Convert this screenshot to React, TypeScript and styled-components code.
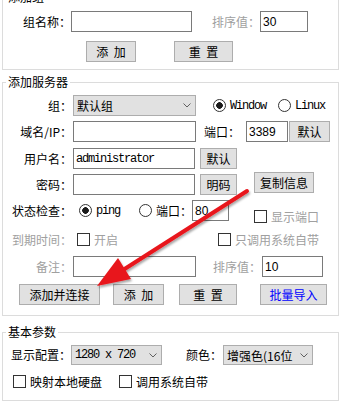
import React from 'react';
import styled, { createGlobalStyle } from 'styled-components';

const CJK = `"Noto Sans CJK SC", "Liberation Sans", sans-serif`;
const MONO = `"Liberation Mono", "Noto Sans CJK SC", monospace`;
const SANS = `"Liberation Sans", "Noto Sans CJK SC", sans-serif`;

const GlobalStyle = createGlobalStyle`
  html, body { margin: 0; padding: 0; background: #ffffff; }
  body {
    font-family: ${CJK};
    font-size: 12px;
    color: #000;
  }
`;

const Page = styled.div`
  position: relative;
  width: 344px;
  height: 402px;
  overflow: hidden;
  background: #fff;
`;

// the first group box is scrolled a little out of view
const Stack = styled.div`
  display: flex;
  flex-direction: column;
  margin-top: -10px;
`;

const Group = styled.fieldset<{ $mt: number; $pt: number; $pb: number }>`
  box-sizing: border-box;
  width: 337px;
  min-width: 0;
  margin: ${p => p.$mt}px 0 0 2px;
  padding: ${p => p.$pt}px 0 ${p => p.$pb}px 0;
  border: 1px solid #dcdcdc;
`;

const Legend = styled.legend`
  margin-left: 3px;
  padding: 0 2px;
  font-family: ${CJK};
  font-size: 12px;
  line-height: 14px;
  color: #000;
`;

const Row = styled.div<{ $mt?: number; $h?: number }>`
  display: flex;
  align-items: center;
  height: ${p => p.$h ?? 21}px;
  margin-top: ${p => p.$mt ?? 0}px;
`;

const Label = styled.span<{ $w?: number; $ml?: number; $muted?: boolean }>`
  flex: none;
  ${p => (p.$w ? `width: ${p.$w}px; text-align: right;` : '')}
  margin-left: ${p => p.$ml ?? 0}px;
  font-family: ${CJK};
  font-size: 12px;
  line-height: 14px;
  white-space: nowrap;
  color: ${p => (p.$muted ? '#a0a0a0' : '#000')};
`;

const Field = styled.input<{ $w: number; $ml?: number; $mono?: boolean }>`
  flex: none;
  box-sizing: border-box;
  width: ${p => p.$w}px;
  height: 100%;
  margin: 0 0 0 ${p => p.$ml ?? 0}px;
  padding: 0 0 0 2px;
  border: 1px solid #7a7a7a;
  border-radius: 0;
  background: #fff;
  outline: none;
  font-family: ${p => (p.$mono ? MONO : SANS)};
  font-size: 12px;
  letter-spacing: ${p => (p.$mono ? -1.2 : 0)}px;
  color: #000;
`;

const Button = styled.button<{ $w: number; $ml?: number; $link?: boolean; $lift?: number }>`
  flex: none;
  box-sizing: border-box;
  width: ${p => p.$w}px;
  height: 100%;
  margin: 0 0 ${p => p.$lift ?? 0}px ${p => p.$ml ?? 0}px;
  padding: 0;
  border: 1px solid #adadad;
  border-radius: 0;
  background: #e1e1e1;
  font-family: ${CJK};
  font-size: 12px;
  line-height: 14px;
  color: ${p => (p.$link ? '#0000ff' : '#000')};
  white-space: pre;
`;

const Select = styled.div<{ $w: number; $ml?: number; $mono?: boolean }>`
  flex: none;
  box-sizing: border-box;
  width: ${p => p.$w}px;
  height: 100%;
  margin-left: ${p => p.$ml ?? 0}px;
  padding: 0 4px 0 3px;
  display: flex;
  align-items: center;
  justify-content: space-between;
  border: 1px solid #adadad;
  background: #e1e1e1;
  font-family: ${p => (p.$mono ? MONO : CJK)};
  font-size: 12px;
  letter-spacing: ${p => (p.$mono ? -1.2 : 0)}px;
  white-space: pre;
  overflow: hidden;
`;

const Option = styled.span<{ $ml?: number; $mt?: number }>`
  flex: none;
  display: inline-flex;
  align-items: center;
  gap: 4px;
  margin: ${p => p.$mt ?? 0}px 0 0 ${p => p.$ml ?? 0}px;
`;

const RadioMark = styled.span<{ $on?: boolean }>`
  box-sizing: border-box;
  width: 13px;
  height: 13px;
  border-radius: 50%;
  border: 1px solid #333;
  background: ${p => (p.$on ? 'radial-gradient(circle, #1a1a1a 0 3px, #fff 3.6px)' : '#fff')};
`;

const CheckMark = styled.span`
  box-sizing: border-box;
  width: 13px;
  height: 13px;
  border: 1px solid #333;
  background: #fff;
`;

const OptionText = styled.span<{ $mono?: boolean; $muted?: boolean }>`
  font-family: ${p => (p.$mono ? MONO : CJK)};
  font-size: 12px;
  letter-spacing: ${p => (p.$mono ? -1.2 : 0)}px;
  line-height: 14px;
  white-space: nowrap;
  color: ${p => (p.$muted ? '#a0a0a0' : '#000')};
`;

const ArrowLayer = styled.svg`
  position: absolute;
  left: 0;
  top: 0;
  width: 344px;
  height: 402px;
  pointer-events: none;
`;

const Chevron = () => (
  <svg width="8" height="5" viewBox="0 0 8 5">
    <polyline points="0.5,0.5 4,4 7.5,0.5" fill="none" stroke="#606060" strokeWidth="1" />
  </svg>
);

const Radio = ({ on, text, mono, ml }: { on?: boolean; text: string; mono?: boolean; ml?: number }) => (
  <Option $ml={ml}>
    <RadioMark $on={on} />
    <OptionText $mono={mono}>{text}</OptionText>
  </Option>
);

const Check = ({ text, muted, ml, mt }: { text: string; muted?: boolean; ml?: number; mt?: number }) => (
  <Option $ml={ml} $mt={mt}>
    <CheckMark />
    <OptionText $muted={muted}>{text}</OptionText>
  </Option>
);

const RedArrow = () => (
  <ArrowLayer viewBox="0 0 344 402">
    <defs>
      <filter id="arrowShadow" x="-20%" y="-20%" width="140%" height="140%">
        <feDropShadow dx="1" dy="2" stdDeviation="1.2" floodColor="#000" floodOpacity="0.35" />
      </filter>
    </defs>
    <g filter="url(#arrowShadow)">
      <line x1="247" y1="191" x2="123" y2="270" stroke="#e8161c" strokeWidth="4" strokeLinecap="round" />
      <polygon points="97,286 118,258 131,279" fill="#e8161c" />
    </g>
  </ArrowLayer>
);

const App = () => {
  return (
    <Page>
      <GlobalStyle />
      <Stack>
        <Group $mt={0} $pt={7} $pb={7}>
          <Legend>添加组</Legend>
          <Row>
            <Label $w={68}>组名称：</Label>
            <Field $w={121} defaultValue="" readOnly />
            <Label $ml={20} $muted>排序值：</Label>
            <Field $w={48} defaultValue="30" readOnly />
          </Row>
          <Row $mt={9}>
            <Button $w={50} $ml={83}>添  加</Button>
            <Button $w={59} $ml={38}>重  置</Button>
          </Row>
        </Group>

        <Group $mt={5} $pt={6} $pb={10}>
          <Legend>添加服务器</Legend>
          <Row>
            <Label $w={69}>组：</Label>
            <Select $w={123} $ml={1}>
              默认组
              <Chevron />
            </Select>
            <Radio on text="Window" mono ml={17} />
            <Radio text="Linux" mono ml={12} />
          </Row>
          <Row $mt={5}>
            <Label $w={69}>域名/IP：</Label>
            <Field $w={123} $ml={1} defaultValue="" readOnly />
            <Label $ml={8}>端口：</Label>
            <Field $w={42} $ml={6} defaultValue="3389" readOnly />
            <Button $w={41} $ml={1}>默认</Button>
          </Row>
          <Row $mt={6}>
            <Label $w={69}>用户名：</Label>
            <Field $w={122} $ml={1} $mono defaultValue="administrator" readOnly />
            <Button $w={37} $ml={5}>默认</Button>
          </Row>
          <Row $mt={5}>
            <Label $w={69}>密码：</Label>
            <Field $w={122} $ml={1} type="text" defaultValue="" readOnly />
            <Button $w={37} $ml={5}>明码</Button>
            <Button $w={60} $ml={17} $lift={4}>复制信息</Button>
          </Row>
          <Row $mt={5}>
            <Label $w={69}>状态检查：</Label>
            <Radio on text="ping" mono ml={7} />
            <Radio text="端口：" ml={19} />
            <Field $w={37} $ml={0} defaultValue="80" readOnly />
            <Check text="显示端口" muted ml={25} mt={12} />
          </Row>
          <Row $mt={8}>
            <Label $w={69} $muted>到期时间：</Label>
            <Check text="开启" muted ml={5} />
            <Check text="只调用系统自带" muted ml={100} />
          </Row>
          <Row $mt={6}>
            <Label $w={69} $muted>备注：</Label>
            <Field $w={123} $ml={1} defaultValue="" readOnly />
            <Label $ml={17} $muted>排序值：</Label>
            <Field $w={61} $ml={1} defaultValue="10" readOnly />
          </Row>
          <Row $mt={7}>
            <Button $w={81} $ml={16}>添加并连接</Button>
            <Button $w={51} $ml={13}>添  加</Button>
            <Button $w={58} $ml={15}>重  置</Button>
            <Button $w={67} $ml={23} $link>批量导入</Button>
          </Row>
        </Group>

        <Group $mt={9} $pt={6} $pb={8}>
          <Legend>基本参数</Legend>
          <Row $h={20}>
            <Label $w={68}>显示配置：</Label>
            <Select $w={91} $mono>
              1280 x 720
              <Chevron />
            </Select>
            <Label $ml={24}>颜色：</Label>
            <Select $w={90} $ml={1}>
              增强色(16位
              <Chevron />
            </Select>
          </Row>
          <Row $mt={6}>
            <Check text="映射本地硬盘" ml={10} />
            <Check text="调用系统自带" ml={17} />
          </Row>
        </Group>
      </Stack>
      <RedArrow />
    </Page>
  );
};

export default App;
